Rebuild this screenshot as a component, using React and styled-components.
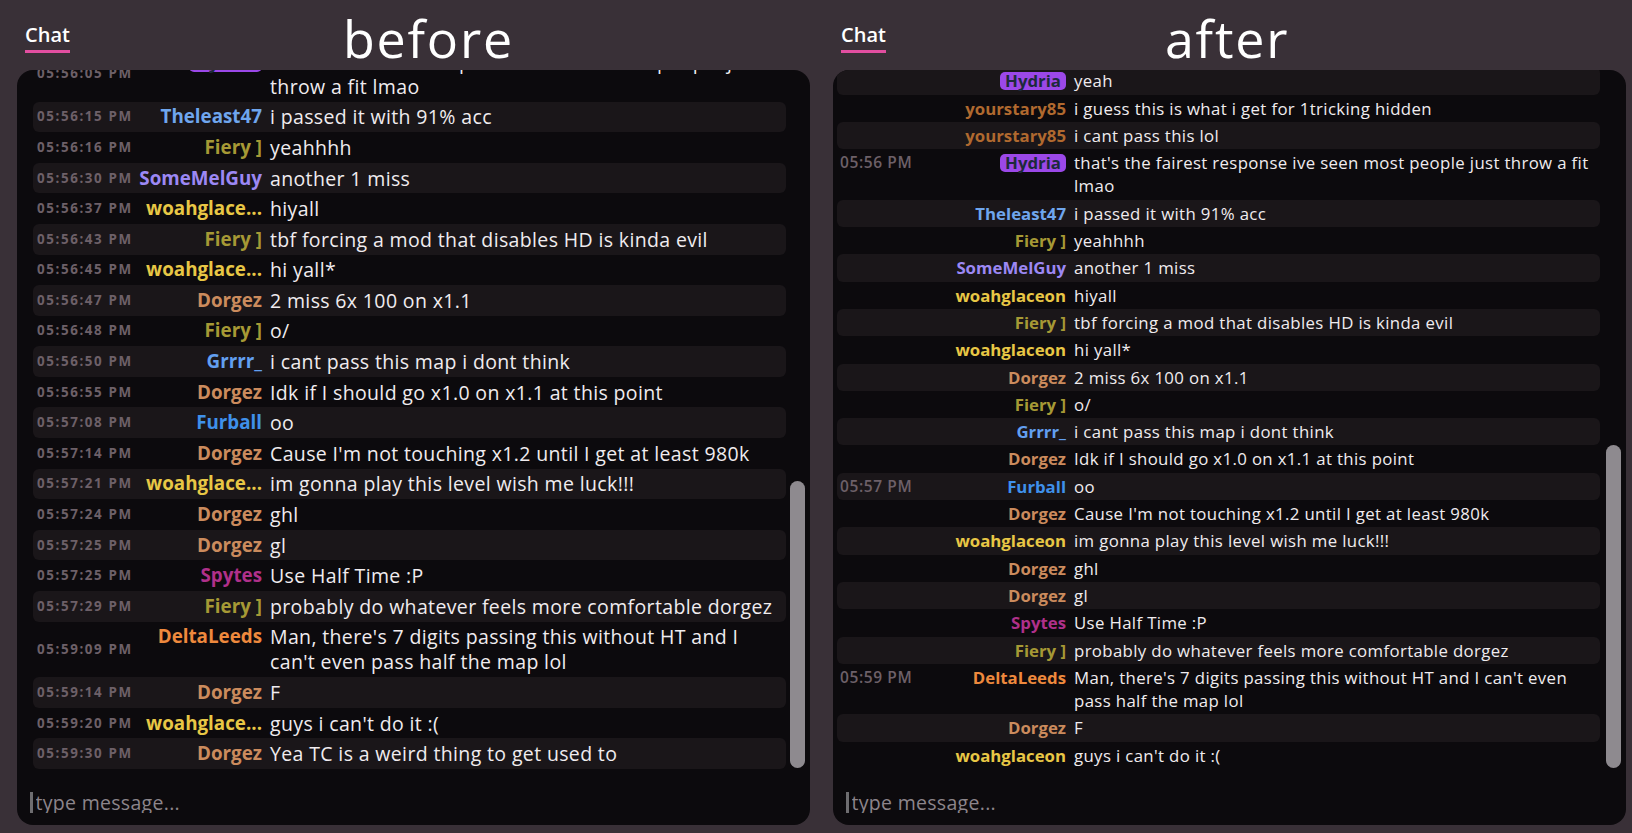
import React from 'react'
import styled, { createGlobalStyle } from 'styled-components'

const GlobalStyle = createGlobalStyle`
  * { box-sizing: border-box; }
  body {
    margin: 0;
    background: #393037;
    font-family: "Open Sans", "Noto Sans", sans-serif;
    color: #eeeaed;
  }
`

// name colours as seen in the chat
const colors = {
  Hydria: '#9b48e8',
  yourstary85: '#b0692f',
  Theleast47: '#6fa6ee',
  'Fiery ]': '#a69935',
  SomeMelGuy: '#9c88f4',
  woahglaceon: '#e8c745',
  Dorgez: '#cb8b5d',
  'Grrrr_': '#629ff0',
  Furball: '#3f90ea',
  Spytes: '#b0308a',
  DeltaLeeds: '#ee893d',
}

const messages = [
  { t: '05:55:52', user: 'Hydria', badge: true, text: 'yeah' },
  { t: '05:55:55', user: 'yourstary85', text: 'i guess this is what i get for 1tricking hidden' },
  { t: '05:55:59', user: 'yourstary85', text: 'i cant pass this lol' },
  { t: '05:56:05', user: 'Hydria', badge: true, text: "that's the fairest response ive seen most people just throw a fit lmao" },
  { t: '05:56:15', user: 'Theleast47', text: 'i passed it with 91% acc' },
  { t: '05:56:16', user: 'Fiery ]', text: 'yeahhhh' },
  { t: '05:56:30', user: 'SomeMelGuy', text: 'another 1 miss' },
  { t: '05:56:37', user: 'woahglaceon', text: 'hiyall' },
  { t: '05:56:43', user: 'Fiery ]', text: 'tbf forcing a mod that disables HD is kinda evil' },
  { t: '05:56:45', user: 'woahglaceon', text: 'hi yall*' },
  { t: '05:56:47', user: 'Dorgez', text: '2 miss 6x 100 on x1.1' },
  { t: '05:56:48', user: 'Fiery ]', text: 'o/' },
  { t: '05:56:50', user: 'Grrrr_', text: 'i cant pass this map i dont think' },
  { t: '05:56:55', user: 'Dorgez', text: 'Idk if I should go x1.0 on x1.1 at this point' },
  { t: '05:57:08', user: 'Furball', text: 'oo' },
  { t: '05:57:14', user: 'Dorgez', text: "Cause I'm not touching x1.2 until I get at least 980k" },
  { t: '05:57:21', user: 'woahglaceon', text: 'im gonna play this level wish me luck!!!' },
  { t: '05:57:24', user: 'Dorgez', text: 'ghl' },
  { t: '05:57:25', user: 'Dorgez', text: 'gl' },
  { t: '05:57:25', user: 'Spytes', text: 'Use Half Time :P' },
  { t: '05:57:29', user: 'Fiery ]', text: 'probably do whatever feels more comfortable dorgez' },
  { t: '05:59:09', user: 'DeltaLeeds', text: "Man, there's 7 digits passing this without HT and I can't even pass half the map lol" },
  { t: '05:59:14', user: 'Dorgez', text: 'F' },
  { t: '05:59:20', user: 'woahglaceon', text: "guys i can't do it :(" },
  { t: '05:59:30', user: 'Dorgez', text: 'Yea TC is a weird thing to get used to' },
]

const variants = {
  before: {
    cols: '96px 121px 1fr',
    pad: '2.8px 4px',
    line: 25,
    font: 19.5,
    nameFont: 18.8,
    badge: 20.6,
    listLeft: 16,
    listRight: 4,
    thumb: 287,
  },
  after: {
    cols: '100px 118px 1fr',
    pad: '2px 3px',
    line: 23.3,
    font: 16.8,
    nameFont: 16.8,
    badge: 17.6,
    listLeft: 4,
    listRight: 6,
    thumb: 323,
  },
}

const minute = (t) => t.slice(0, 5)
const fullTime = (t) => `${t} PM`
const shortName = (n) => (n.length > 10 ? n.slice(0, 9) + '...' : n)

const ChatMessage = ({ msg, prev, index, v }) => {
  const cfg = variants[v]
  let stamp = ''
  if (v === 'before') stamp = fullTime(msg.t)
  else if (prev && minute(prev.t) !== minute(msg.t)) stamp = `${minute(msg.t)} PM`
  const name = v === 'before' ? shortName(msg.user) : msg.user

  return (
    <Row $cfg={cfg} $alt={index % 2 === 0}>
      <Stamp $v={v}>{stamp}</Stamp>
      <Name $color={colors[msg.user]} $size={cfg.nameFont} $line={cfg.line}>
        {msg.badge ? <Badge $h={cfg.badge}>{name}</Badge> : <span>{name}</span>}
      </Name>
      <Text $size={cfg.font}>{msg.text}</Text>
    </Row>
  )
}

const ChatColumn = ({ v, title, titleOffset }) => {
  const cfg = variants[v]
  const list = v === 'after' ? messages.slice(0, -1) : messages
  return (
    <Column>
      <Header>
        <Tab>Chat</Tab>
        <Title $offset={titleOffset}>{title}</Title>
      </Header>
      <Panel>
        <Body>
          <MessageList $left={cfg.listLeft} $right={cfg.listRight}>
            {list.map((m, i) => (
              <ChatMessage key={i} msg={m} prev={list[i - 1]} index={i} v={v} />
            ))}
          </MessageList>
          <Track>
            <Thumb $h={cfg.thumb} />
          </Track>
        </Body>
        <InputBar>
          <MessageInput placeholder="type message..." readOnly />
        </InputBar>
      </Panel>
    </Column>
  )
}

export default function App() {
  return (
    <>
      <GlobalStyle />
      <Page>
        <ChatColumn v="before" title="before" titleOffset={273} />
        <ChatColumn v="after" title="after" titleOffset={279} />
      </Page>
    </>
  )
}

const Page = styled.div`
  display: grid;
  grid-template-columns: 816px 816px;
  height: 833px;
  overflow: hidden;
`

const Column = styled.div`
  display: grid;
  grid-template-rows: 70px 755px;
  padding: 0 6px 8px 17px;
  min-width: 0;
`

const Header = styled.div`
  display: flex;
  align-items: flex-start;
  padding-left: 8px;
`

const Tab = styled.div`
  margin-top: 21px;
  font-size: 20px;
  line-height: 27px;
  font-weight: 600;
  color: #ffffff;
  padding-bottom: 2px;
  border-bottom: 3px solid #e24ea0;
`

const Title = styled.div`
  margin-left: ${(p) => p.$offset}px;
  margin-top: 12px;
  font-size: 52px;
  line-height: 52px;
  font-weight: 400;
  color: #ffffff;
  letter-spacing: 1.8px;
`

const Panel = styled.div`
  display: flex;
  flex-direction: column;
  background: #0c0a0d;
  border-radius: 16px;
  overflow: hidden;
  min-height: 0;
`

const Body = styled.div`
  display: flex;
  height: 699px;
  min-height: 0;
`

const MessageList = styled.div`
  flex: 1;
  min-width: 0;
  display: flex;
  flex-direction: column;
  justify-content: flex-end;
  overflow: hidden;
  padding: 0 ${(p) => p.$right}px 0 ${(p) => p.$left}px;
`

const Row = styled.div`
  flex-shrink: 0;
  display: grid;
  grid-template-columns: ${(p) => p.$cfg.cols};
  column-gap: 8px;
  align-items: start;
  padding: ${(p) => p.$cfg.pad};
  line-height: ${(p) => p.$cfg.line}px;
  border-radius: 6px;
  background: ${(p) => (p.$alt ? '#1a1619' : 'transparent')};
`

const Stamp = styled.div`
  align-self: ${(p) => (p.$v === 'before' ? 'center' : 'start')};
  color: #6d6068;
  white-space: nowrap;
  font-weight: ${(p) => (p.$v === 'before' ? 700 : 600)};
  font-size: ${(p) => (p.$v === 'before' ? '13.4px' : '15.5px')};
  letter-spacing: ${(p) => (p.$v === 'before' ? '1.6px' : '0.6px')};
`

const Name = styled.div`
  display: flex;
  justify-content: flex-end;
  align-items: center;
  min-height: ${(p) => p.$line}px;
  white-space: nowrap;
  font-weight: 700;
  font-size: ${(p) => p.$size}px;
  color: ${(p) => p.$color};
`

const Badge = styled.span`
  display: inline-block;
  background: #9b48e8;
  color: #1e2a3b;
  border-radius: 5px;
  padding: 0 5px;
  line-height: ${(p) => p.$h}px;
`

const Text = styled.div`
  font-size: ${(p) => p.$size}px;
  letter-spacing: 0.36px;
  color: #f0ecef;
  overflow-wrap: anywhere;
`

const Track = styled.div`
  width: 15px;
  margin-right: 5px;
  display: flex;
  flex-direction: column;
  justify-content: flex-end;
  padding-bottom: 1px;
`

const Thumb = styled.div`
  height: ${(p) => p.$h}px;
  border-radius: 8px;
  background: #8e8a8f;
`

const InputBar = styled.div`
  height: 56px;
  padding: 23px 0 0 13px;
`

const MessageInput = styled.input`
  display: block;
  width: 100%;
  height: 21px;
  background: transparent;
  border: none;
  border-left: 3.3px solid #6e6d70;
  outline: none;
  padding: 0 0 0 2.5px;
  font-family: "Open Sans", "Noto Sans", sans-serif;
  font-size: 19.5px;
  letter-spacing: 0.3px;
  line-height: 21px;
  color: #eeeaed;

  &::placeholder {
    color: #8c858b;
  }
`
